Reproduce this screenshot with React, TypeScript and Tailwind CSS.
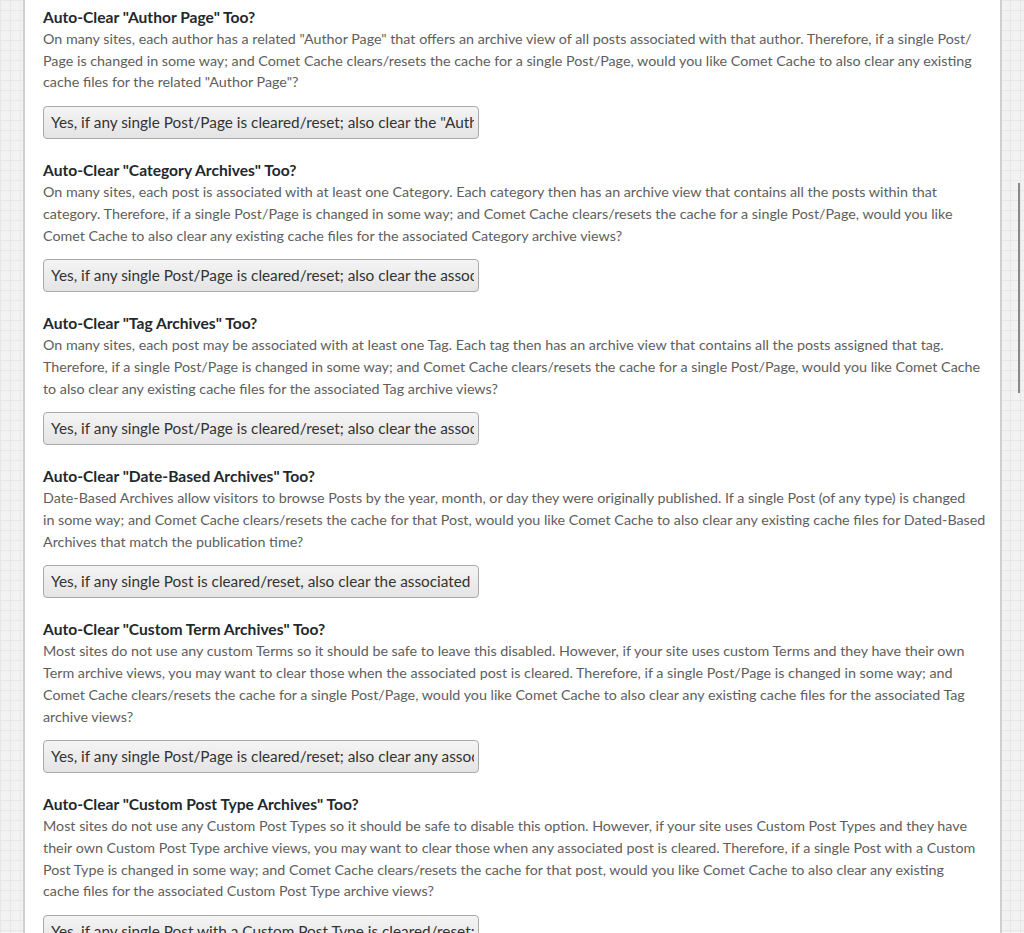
import React from 'react';

type Section = {
    title: string;
    lines: string[];
    option: string;
};

// body copy is kept line by line so the wraps land where the original's do
const sections: Section[] = [
    {
        title: 'Auto-Clear "Author Page" Too?',
        lines: [
            'On many sites, each author has a related "Author Page" that offers an archive view of all posts associated with that author. Therefore, if a single Post/',
            'Page is changed in some way; and Comet Cache clears/resets the cache for a single Post/Page, would you like Comet Cache to also clear any existing',
            'cache files for the related "Author Page"?',
        ],
        option: 'Yes, if any single Post/Page is cleared/reset; also clear the "Author Page"',
    },
    {
        title: 'Auto-Clear "Category Archives" Too?',
        lines: [
            'On many sites, each post is associated with at least one Category. Each category then has an archive view that contains all the posts within that',
            'category. Therefore, if a single Post/Page is changed in some way; and Comet Cache clears/resets the cache for a single Post/Page, would you like',
            'Comet Cache to also clear any existing cache files for the associated Category archive views?',
        ],
        option: 'Yes, if any single Post/Page is cleared/reset; also clear the associated Category archive views',
    },
    {
        title: 'Auto-Clear "Tag Archives" Too?',
        lines: [
            'On many sites, each post may be associated with at least one Tag. Each tag then has an archive view that contains all the posts assigned that tag.',
            'Therefore, if a single Post/Page is changed in some way; and Comet Cache clears/resets the cache for a single Post/Page, would you like Comet Cache',
            'to also clear any existing cache files for the associated Tag archive views?',
        ],
        option: 'Yes, if any single Post/Page is cleared/reset; also clear the associated Tag archive views',
    },
    {
        title: 'Auto-Clear "Date-Based Archives" Too?',
        lines: [
            'Date-Based Archives allow visitors to browse Posts by the year, month, or day they were originally published. If a single Post (of any type) is changed',
            'in some way; and Comet Cache clears/resets the cache for that Post, would you like Comet Cache to also clear any existing cache files for Dated-Based',
            'Archives that match the publication time?',
        ],
        option: 'Yes, if any single Post is cleared/reset, also clear the associated Date archive views',
    },
    {
        title: 'Auto-Clear "Custom Term Archives" Too?',
        lines: [
            'Most sites do not use any custom Terms so it should be safe to leave this disabled. However, if your site uses custom Terms and they have their own',
            'Term archive views, you may want to clear those when the associated post is cleared. Therefore, if a single Post/Page is changed in some way; and',
            'Comet Cache clears/resets the cache for a single Post/Page, would you like Comet Cache to also clear any existing cache files for the associated Tag',
            'archive views?',
        ],
        option: 'Yes, if any single Post/Page is cleared/reset; also clear any associated custom Term archive views',
    },
    {
        title: 'Auto-Clear "Custom Post Type Archives" Too?',
        lines: [
            'Most sites do not use any Custom Post Types so it should be safe to disable this option. However, if your site uses Custom Post Types and they have',
            'their own Custom Post Type archive views, you may want to clear those when any associated post is cleared. Therefore, if a single Post with a Custom',
            'Post Type is changed in some way; and Comet Cache clears/resets the cache for that post, would you like Comet Cache to also clear any existing',
            'cache files for the associated Custom Post Type archive views?',
        ],
        option: 'Yes, if any single Post with a Custom Post Type is cleared/reset; also clear any associated archive views',
    },
];

function OptionSection({ s, first }: { s: Section; first: boolean }) {
    return (
        <div className={first ? '' : 'mt-[20px]'}>
            <h3 className="text-[15.6px] leading-[22px] font-bold text-[#23282d]">{s.title}</h3>
            <div className="text-[14.3px] leading-[21.7px] text-[#5e5e5e]">
                {s.lines.map(line => (
                    <div key={line} className="whitespace-nowrap">{line}</div>
                ))}
            </div>
            <div className="mt-[13px] h-[33px] w-[436px] rounded-[4px] border border-[#a9a9a9] bg-[linear-gradient(#f4f4f4,#e4e4e4)] pl-[7px] pr-[4px] text-[15.35px] leading-[31px] text-[#333]">
                <div className="overflow-hidden whitespace-nowrap">{s.option}</div>
            </div>
        </div>
    );
}

export default function App() {
    return (
        <div
            className="relative h-[933px] w-[1024px] overflow-hidden bg-[#f2f2f2] bg-[linear-gradient(to_right,#e7e7e7_1px,transparent_1px),linear-gradient(to_bottom,#e7e7e7_1px,transparent_1px)] bg-[size:10px_10px]"
            style={{ fontFamily: 'Lato, "Open Sans", sans-serif' }}
        >
            <div className="ml-[23px] h-full w-[979px] border-x-2 border-[#cfcfcf] bg-white pl-[18px] pr-[16px] pt-[6px]">
                {sections.map((s, i) => (
                    <OptionSection key={s.title} s={s} first={i === 0} />
                ))}
            </div>
            <div className="absolute left-[1018px] top-[183px] h-[210px] w-[2px] bg-[#8a8a8a]" />
        </div>
    );
}
